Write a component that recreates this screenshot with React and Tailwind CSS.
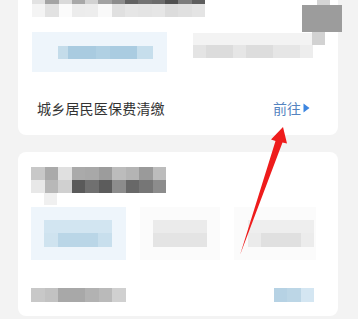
import React from 'react';

const cnFont = { fontFamily: '"Noto Sans CJK SC", "Noto Sans", sans-serif' };

// blurred (mosaic) bits of the screenshot, one class per cell
const headTop = ['bg-[#e2e2e2]', 'bg-[#a4a4a4]', 'bg-[#dadada]', 'bg-[#a8a8a8]', 'bg-[#d2d2d2]', 'bg-[#a2a2a2]', 'bg-[#8c8c8c]', 'bg-[#626262]', 'bg-[#727272]', 'bg-[#6c6c6c]', 'bg-[#505050]', 'bg-[#7c7c7c]', 'bg-[#5e5e5e]'];
const headBottom = ['bg-[#f4f4f4]', 'bg-[#e2e2e2]', 'bg-[#fbfbfb]', 'bg-[#ececec]', 'bg-[#ededed]', 'bg-[#f9f9f9]', 'bg-[#e0e0e0]', 'bg-[#e6e6e6]', 'bg-[#e4e4e4]', 'bg-[#e6e6e6]', 'bg-[#dcdcdc]', 'bg-[#e0e0e0]', 'bg-[#e4e4e4]'];

const title2Top = ['bg-[#c8c8c8]', 'bg-[#aaaaaa]', 'bg-[#e0e0e0]', 'bg-[#aaaaaa]', 'bg-[#a8a8a8]', 'bg-[#9c9c9c]', 'bg-[#bcbcbc]', 'bg-[#b4b4b4]', 'bg-[#9a9a9a]', 'bg-[#bcbcbc]'];
const title2Bottom = ['bg-[#e8e8e8]', 'bg-[#b8b8b8]', 'bg-[#d0d0d0]', 'bg-[#5a5a5a]', 'bg-[#707070]', 'bg-[#5c5c5c]', 'bg-[#8c8c8c]', 'bg-[#686868]', 'bg-[#767676]', 'bg-[#8c8c8c]'];

const footGray = ['bg-[#c8c8c8]', 'bg-[#c2c2c2]', 'bg-[#a8a8a8]', 'bg-[#a8a8a8]', 'bg-[#b2b2b2]', 'bg-[#bababa]', 'bg-[#d0d0d0]'];
const footBlue = ['bg-[#b6d2e4]', 'bg-[#bcd6e6]', 'bg-[#d4e6f2]'];

const Cells = ({ colors, cell, h }) => (
    <div className="flex">
        {colors.map((c, i) => (
            <div key={i} className={`${cell} ${h} ${c}`}></div>
        ))}
    </div>
);

const App = () => {
    return (
        <div className="relative w-[358px] h-[319px] overflow-hidden bg-[#f3f3f3]" style={cnFont}>
            {/* card 1, its top is scrolled away */}
            <div className="relative ml-[18px] w-[320px] h-[135px] bg-white rounded-b-lg pl-[14px]">
                <Cells colors={headTop} cell="w-[13.3px]" h="h-[4px]" />
                <Cells colors={headBottom} cell="w-[13.3px]" h="h-[13px]" />

                {/* blurred thumbnail in the corner */}
                <div className="absolute top-0 right-[-4px] w-[40px] flex flex-col items-center">
                    <div className="w-[13px] h-[5px] bg-[#d4d4d4] ml-[2px]"></div>
                    <div className="w-[40px] h-[27px] bg-[#9c9c9c]"></div>
                    <div className="w-[13px] h-[13px] bg-[#d2d2d2] ml-[-8px]"></div>
                </div>

                <div className="flex items-start mt-[15px] gap-[26px]">
                    <div className="w-[135px] h-[40px] bg-[#eef5fb] flex items-center pl-[26px]">
                        <div className="flex h-[13px]">
                            <div className="w-[10px] bg-[#c4dcea]"></div>
                            <div className="w-[28px] bg-[#a9cbe0]"></div>
                            <div className="w-[14px] bg-[#b0d0e3]"></div>
                            <div className="w-[27px] bg-[#aacce1]"></div>
                            <div className="w-[16px] bg-[#c6deec]"></div>
                        </div>
                    </div>
                    <div className="w-[120px] mt-[1px]">
                        <div className="h-[12px] bg-[#f3f3f3]"></div>
                        <div className="flex h-[13px]">
                            <div className="w-[13px] bg-[#e4e4e4]"></div>
                            <div className="w-[27px] bg-[#dcdcdc]"></div>
                            <div className="w-[13px] bg-[#e6e6e6]"></div>
                            <div className="w-[27px] bg-[#dddddd]"></div>
                            <div className="w-[27px] bg-[#e6e6e6]"></div>
                            <div className="w-[13px] bg-[#ededed]"></div>
                        </div>
                    </div>
                </div>

                <div className="flex items-center justify-between h-[63px] pt-[9px] pl-[5px] pr-[28px]">
                    <span className="text-[14px] leading-[20px] text-[#333333] tracking-[0.2px]">城乡居民医保费清缴</span>
                    <span className="flex items-center text-[14px] leading-[20px] text-[#5584c0]">
                        前往
                        <svg width="8" height="10" viewBox="0 0 8 10" className="ml-[1px]">
                            <path d="M1.5 0.5 L7.5 5 L1.5 9.5 Z" fill="#3d86e0" />
                        </svg>
                    </span>
                </div>
            </div>

            {/* card 2 */}
            <div className="ml-[18px] mt-[17px] w-[320px] h-[164px] bg-white rounded-lg px-[13px] pt-[15px]">
                <Cells colors={title2Top} cell="w-[13.5px]" h="h-[13px]" />
                <Cells colors={title2Bottom} cell="w-[13.5px]" h="h-[13px]" />
                <div className="ml-[13px] w-[13px] h-[12px] bg-[#f0f0f0]"></div>

                <div className="flex mt-[2px] gap-[14px]">
                    <div className="w-[95px] h-[53px] bg-[#eef5fb] flex items-center pl-[13px]">
                        <div className="w-[68px]">
                            <div className="h-[13px] bg-[#d2e5f1]"></div>
                            <div className="flex h-[14px]">
                                <div className="w-[14px] bg-[#cfe3ef]"></div>
                                <div className="w-[40px] bg-[#bad6e7]"></div>
                                <div className="w-[14px] bg-[#c8dfed]"></div>
                            </div>
                        </div>
                    </div>
                    <div className="w-[80px] h-[53px] bg-[#fbfbfb] flex items-center pl-[13px]">
                        <div className="w-[54px]">
                            <div className="h-[13px] bg-[#ebebeb]"></div>
                            <div className="h-[14px] bg-[#e4e4e4]"></div>
                        </div>
                    </div>
                    <div className="w-[82px] h-[53px] bg-[#fbfbfb] flex items-center pl-[14px]">
                        <div className="w-[66px]">
                            <div className="h-[13px] bg-[#eeeeee]"></div>
                            <div className="flex h-[14px]">
                                <div className="w-[13px] bg-[#ebebeb]"></div>
                                <div className="w-[40px] bg-[#e0e0e0]"></div>
                                <div className="w-[13px] bg-[#ececec]"></div>
                            </div>
                        </div>
                    </div>
                </div>

                <div className="flex justify-between items-center mt-[28px] pr-[11px]">
                    <Cells colors={footGray} cell="w-[13.5px]" h="h-[14px]" />
                    <Cells colors={footBlue} cell="w-[13.4px]" h="h-[14px]" />
                </div>
            </div>

            {/* red arrow drawn over the screenshot */}
            <svg className="absolute inset-0 pointer-events-none" width="358" height="319" viewBox="0 0 358 319">
                <polygon points="240,255 275.5,141 271,139.5 283,127 287,143.5 282.5,142.5" fill="#ee1c1c" />
            </svg>
        </div>
    );
};

export default App;
